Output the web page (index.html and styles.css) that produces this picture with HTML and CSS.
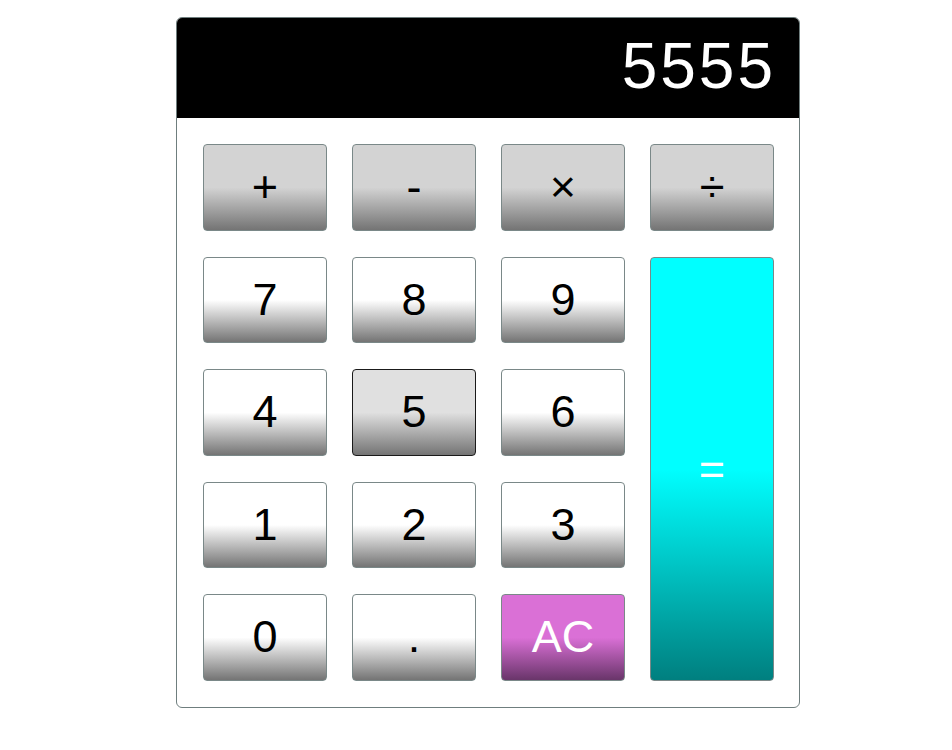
FILE: index.html
```html
<!DOCTYPE html>
<html lang="en">
<head>
<meta charset="utf-8">
<title>Calculator</title>
<link rel="stylesheet" href="styles.css">
</head>
<body>
<div class="page">
  <div class="calc">
    <div class="display">5555</div>
    <div class="keys">
      <button class="key op">+</button>
      <button class="key op">-</button>
      <button class="key op">×</button>
      <button class="key op">÷</button>
      <button class="key">7</button>
      <button class="key">8</button>
      <button class="key">9</button>
      <button class="key equals">=</button>
      <button class="key">4</button>
      <button class="key pressed">5</button>
      <button class="key">6</button>
      <button class="key">1</button>
      <button class="key">2</button>
      <button class="key">3</button>
      <button class="key">0</button>
      <button class="key">.</button>
      <button class="key clear">AC</button>
    </div>
  </div>
</div>
</body>
</html>
```
FILE: styles.css
```css
html, body {
  margin: 0;
  padding: 0;
  background: #ffffff;
  font-family: "Liberation Sans", Arial, sans-serif;
}

.page {
  display: flex;
  padding: 17px 0 0 176px;
}

.calc {
  width: 622px;
  border: 1px solid #6f7e7e;
  border-radius: 6px;
  overflow: hidden;
  background: #ffffff;
}

.display {
  height: 100px;
  box-sizing: border-box;
  background: #000000;
  color: #ffffff;
  font-size: 64px;
  display: flex;
  align-items: center;
  justify-content: flex-end;
  padding: 0 23px 4px 0;
  letter-spacing: 3px;
}

.keys {
  display: grid;
  grid-template-columns: repeat(4, 124px);
  grid-auto-rows: 86.5px;
  column-gap: 25px;
  row-gap: 26px;
  padding: 26px 25px 26px 26px;
}

.key {
  margin: 0;
  padding: 0;
  border: 1px solid #7a8888;
  border-radius: 4px;
  font-family: "Liberation Sans", Arial, sans-serif;
  font-size: 45px;
  color: #000000;
  background: linear-gradient(to bottom, #ffffff 50%, #747474 100%);
  display: flex;
  align-items: center;
  justify-content: center;
}

.op {
  background: linear-gradient(to bottom, #d3d3d3 50%, #747474 100%);
}

.pressed {
  border-color: #1a1a1a;
  background: linear-gradient(to bottom, #e0e0e0 50%, #747474 100%);
}

.equals {
  grid-column: 4;
  grid-row: 2 / span 4;
  color: #ffffff;
  background: linear-gradient(to bottom, #00ffff 50%, #007f7f 100%);
}

.clear {
  color: #ffffff;
  background: linear-gradient(to bottom, #da70d6 50%, #69356a 100%);
}
```
